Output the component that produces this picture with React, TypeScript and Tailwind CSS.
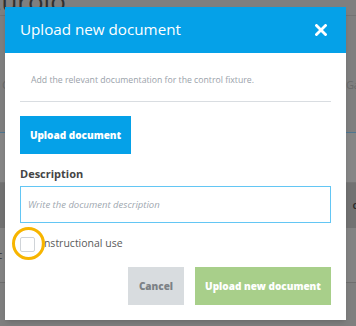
import React, { useState } from "react";

const font = { fontFamily: '"Open Sans", "Liberation Sans", sans-serif' };

const App: React.FC = () => {
  const [description, setDescription] = useState("");
  const [instructional, setInstructional] = useState(false);

  return (
    <div className="relative w-[356px] h-[326px] overflow-hidden bg-[#7f7f7f]" style={font}>
      {/* Page behind the overlay */}
      <div className="flex flex-col">
        <div className="h-[16px] border-b border-[#737373] leading-none">
          <span className="block -mt-[12px] -ml-[15px] text-[26px] text-[#2f2f2f]">Curoio</span>
        </div>
        <div className="h-[54px]" />
        <div className="h-[30px] flex items-center justify-between pl-[2px] text-[11px] text-[#6a6a6a]">
          <span>C</span>
          <span className="-mr-[4px]">Ga</span>
        </div>
        <div className="h-[33px] border-b border-[#4e7690]" />
        <div className="h-[50px] bg-[#868686] border-b border-[#777]" />
        <div className="h-[45px] bg-[#727272] flex items-center justify-end text-[11px] font-semibold text-[#2a2a2a]">
          <span className="-mr-[2px]">c</span>
        </div>
        <div className="h-[55px] bg-[#838383] border-b border-[#6e6e6e] flex items-center text-[11px] text-[#333]">
          <span className="-ml-[3px]">c</span>
        </div>
        <div className="flex-1" />
      </div>

      {/* Modal */}
      <div className="absolute left-[5px] top-[7px] w-[341px] bg-white shadow-md">
        <div className="h-[46px] bg-[#05a1e8] flex items-center justify-between pl-[15px] pr-[19px]">
          <h2 className="text-[15.2px] text-white leading-none">Upload new document</h2>
          <button aria-label="Close" className="text-white">
            <svg width="12" height="12" viewBox="0 0 12 12">
              <path d="M1.5 1.5 L10.5 10.5 M10.5 1.5 L1.5 10.5" stroke="white" strokeWidth="2.8" strokeLinecap="square" />
            </svg>
          </button>
        </div>

        <div className="px-[15px] pt-[21px] pb-[15px]">
          <p className="pl-[11px] text-[8.7px] text-[#9aa2aa] leading-[12px]">
            Add the relevant documentation for the control fixture.
          </p>
          <div className="mt-[15px] border-t border-[#d9dde1]" />

          <button className="mt-[14px] w-[111px] h-[38px] bg-[#05a1e8] text-white text-[10px] font-extrabold">
            Upload document
          </button>

          <label htmlFor="description" className="block mt-[13px] text-[11px] font-bold text-[#454545] leading-[14px]">
            Description
          </label>
          <input
            id="description"
            value={description}
            onChange={(e) => setDescription(e.target.value)}
            placeholder="Write the document description"
            className="mt-[5px] w-full h-[37px] border border-[#63c6f4] px-[7px] text-[9.5px] italic text-[#555] placeholder:text-[#a0a8b0] outline-none"
          />

          <div className="mt-[12px] flex items-center h-[18px]">
            <label className="relative flex items-center cursor-pointer">
              <input
                type="checkbox"
                checked={instructional}
                onChange={(e) => setInstructional(e.target.checked)}
                className="appearance-none w-[15px] h-[15px] rounded-[2px] border border-[#d0d4d8] bg-white"
              />
              <span className="ml-[6px] text-[10.5px] text-[#5a5a5a]">Instructional use</span>
              <span className="absolute z-10 -left-[8px] -top-[9px] w-[33px] h-[33px] rounded-full border-[3px] border-[#f7b500]" />
            </label>
          </div>

          <div className="mt-[14px] flex justify-end gap-[11px]">
            <button className="w-[56px] h-[38px] bg-[#d8dcdf] text-[#7c8186] text-[10px] font-extrabold">
              Cancel
            </button>
            <button className="w-[136px] h-[38px] bg-[#a8cf8a] text-white text-[10px] font-extrabold">
              Upload new document
            </button>
          </div>
        </div>
      </div>
    </div>
  );
};

export default App;
